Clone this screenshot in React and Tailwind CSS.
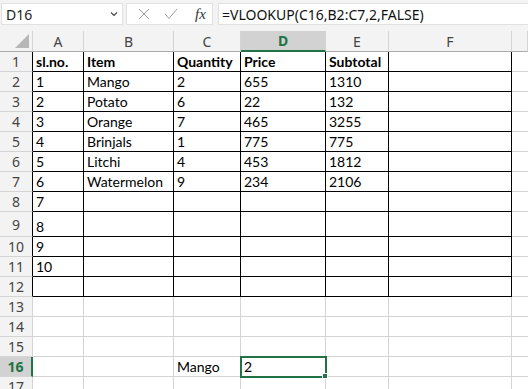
import React from "react";

const cols = ["A", "B", "C", "D", "E", "F", ""];

const rows = [
  { n: 1, h: "h-[20px]", cells: ["sl.no.", "Item", "Quantity", "Price", "Subtotal", ""], bold: true },
  { n: 2, h: "h-[20px]", cells: ["1", "Mango", "2", "655", "1310", ""] },
  { n: 3, h: "h-[20px]", cells: ["2", "Potato", "6", "22", "132", ""] },
  { n: 4, h: "h-[20px]", cells: ["3", "Orange", "7", "465", "3255", ""] },
  { n: 5, h: "h-[20px]", cells: ["4", "Brinjals", "1", "775", "775", ""] },
  { n: 6, h: "h-[20px]", cells: ["5", "Litchi", "4", "453", "1812", ""] },
  { n: 7, h: "h-[20px]", cells: ["6", "Watermelon", "9", "234", "2106", ""] },
  { n: 8, h: "h-[20px]", cells: ["7", "", "", "", "", ""] },
  { n: 9, h: "h-[25px]", cells: ["8", "", "", "", "", ""] },
  { n: 10, h: "h-[20px]", cells: ["9", "", "", "", "", ""] },
  { n: 11, h: "h-[20px]", cells: ["10", "", "", "", "", ""] },
  { n: 12, h: "h-[20px]", cells: ["", "", "", "", "", ""] },
  { n: 13, h: "h-[20px]", cells: ["", "", "", "", "", ""] },
  { n: 14, h: "h-[20px]", cells: ["", "", "", "", "", ""] },
  { n: 15, h: "h-[20px]", cells: ["", "", "", "", "", ""] },
  { n: 16, h: "h-[20px]", cells: ["", "", "Mango", "2", "", ""] },
  { n: 17, h: "h-[20px]", cells: ["", "", "", "", "", ""] },
];

const cellFont = { fontFamily: "Lato, 'Liberation Sans', sans-serif" };
const uiFont = { fontFamily: "'Noto Sans', 'Open Sans', sans-serif" };

function FormulaBar() {
  return (
    <div className="h-[31px] bg-[#f3f3f3] flex items-start pt-[3px] pl-[1px] gap-[3px]" style={uiFont}>
      <div className="w-[122px] h-[22px] bg-white border border-[#e1e1e1] flex items-center justify-between pl-[4px] pr-[3px]">
        <span className="text-[14px] text-[#222]">D16</span>
        <svg width="10" height="10" viewBox="0 0 10 10">
          <path d="M2 3.5 L5 6.5 L8 3.5" fill="none" stroke="#444" strokeWidth="1.2" />
        </svg>
      </div>
      <div className="w-[87px] h-[22px] bg-white border border-[#e1e1e1] flex items-center pl-[11px] gap-[14px]">
        <svg width="12" height="12" viewBox="0 0 12 12">
          <path d="M1 1 L11 11 M11 1 L1 11" stroke="#9c9c9c" strokeWidth="1" fill="none" />
        </svg>
        <svg width="14" height="12" viewBox="0 0 14 12">
          <path d="M1 6 L5 10.5 L13 1" stroke="#9c9c9c" strokeWidth="1" fill="none" />
        </svg>
        <span className="text-[15px] italic text-[#333] ml-[3px]" style={{ fontFamily: "'Liberation Serif', serif" }}>
          fx
        </span>
      </div>
      <div className="flex-1 h-[22px] bg-white border border-[#e1e1e1] border-r-0 flex items-center pl-[3px] ml-[2px]">
        <span className="text-[14px] text-[#111]">=VLOOKUP(C16,B2:C7,2,FALSE)</span>
      </div>
    </div>
  );
}

export default function App() {
  return (
    <div className="w-[528px] h-[389px] overflow-hidden bg-white">
      <FormulaBar />

      <div className="grid grid-cols-[33px_51px_90px_67px_85px_63px_123px_1fr]">
        {/* column headers */}
        <div className="h-[21px] bg-[#f3f3f3] border-b border-[#ababab] border-r border-r-[#d4d4d4] flex items-end justify-end">
          <svg width="16" height="16" viewBox="0 0 16 16" className="mb-[2px] mr-[2px]">
            <polygon points="15,1 15,15 1,15" fill="#b7b7b7" />
          </svg>
        </div>
        {cols.map((c) =>
          c === "D" ? (
            <div
              key="hD"
              className="h-[21px] bg-[#d2d2d2] border-b-2 border-[#217346] border-r border-r-[#d4d4d4] flex items-center justify-center text-[14px] font-bold text-[#217346]"
              style={uiFont}
            >
              D
            </div>
          ) : (
            <div
              key={"h" + c}
              className="h-[21px] bg-[#f3f3f3] border-b border-[#ababab] border-r border-r-[#d4d4d4] flex items-center justify-center text-[14px] text-[#444]"
              style={uiFont}
            >
              {c}
            </div>
          )
        )}

        {rows.map((r) => {
          const inTable = r.n <= 12;
          const sel = r.n === 16;
          return (
            <React.Fragment key={r.n}>
              <div
                className={
                  sel
                    ? `${r.h} bg-[#d2d2d2] border-b border-[#d4d4d4] border-r-2 border-r-[#217346] flex items-center justify-center text-[14px] font-bold text-[#217346]`
                    : inTable
                    ? `${r.h} bg-[#f3f3f3] border-b border-[#d4d4d4] border-r border-r-black flex items-center justify-center text-[14px] text-[#444]`
                    : `${r.h} bg-[#f3f3f3] border-b border-[#d4d4d4] border-r border-r-[#d4d4d4] flex items-center justify-center text-[14px] text-[#444]`
                }
                style={uiFont}
              >
                {r.n}
              </div>
              {r.cells.map((v, i) => {
                const black = inTable;
                const border = black
                  ? "border-r border-b border-black"
                  : r.n === 12
                  ? "border-r border-b border-black"
                  : "border-r border-b border-[#d4d4d4]";
                const isSel = sel && i === 3;
                return (
                  <div
                    key={i}
                    className={`${r.h} ${border} ${r.bold ? "font-bold" : ""} ${
                      isSel ? "relative outline-2 outline-[#217346] -outline-offset-1 z-10" : ""
                    } flex items-end pl-[3px] text-[14px] leading-[18px] text-black whitespace-nowrap`}
                    style={cellFont}
                  >
                    {v}
                    {isSel && (
                      <span className="absolute -right-[3px] -bottom-[3px] w-[6px] h-[6px] bg-[#217346] border border-white" />
                    )}
                  </div>
                );
              })}
              <div className={`${r.h} border-b ${inTable ? "border-[#d4d4d4]" : "border-[#d4d4d4]"}`} />
            </React.Fragment>
          );
        })}
      </div>
    </div>
  );
}
